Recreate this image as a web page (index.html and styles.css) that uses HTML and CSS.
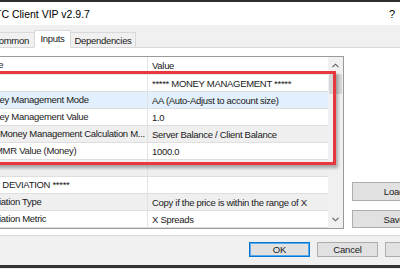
FILE: index.html
```html
<!DOCTYPE html>
<html lang="en">
<head>
    <meta charset="UTF-8">
    <title>TC Client VIP v2.9.7</title>
    <link rel="stylesheet" href="styles.css">
</head>
<body>
    <div class="topline"></div>

    <div class="titlebar">
        <span class="title">TC Client VIP v2.9.7</span>
        <span class="help">?</span>
    </div>

    <div class="tabstrip">
        <div class="tab tab-common">Common</div>
        <div class="tab tab-active">Inputs</div>
        <div class="tab tab-deps">Dependencies</div>
    </div>

    <div class="page">
        <div class="listview">
            <div class="lv-main">
                <div class="lv-row lv-header">
                    <div class="cell name ind-name">Name</div>
                    <div class="cell value">Value</div>
                </div>
                <div class="lv-row">
                    <div class="cell name"></div>
                    <div class="cell value">***** MONEY MANAGEMENT *****</div>
                </div>
                <div class="lv-row selected">
                    <div class="cell name ind-mon">Money Management Mode</div>
                    <div class="cell value">AA (Auto-Adjust to account size)</div>
                </div>
                <div class="lv-row">
                    <div class="cell name ind-mon">Money Management Value</div>
                    <div class="cell value">1.0</div>
                </div>
                <div class="lv-row alt">
                    <div class="cell name ind-calc">Money Management Calculation M...</div>
                    <div class="cell value">Server Balance / Client Balance</div>
                </div>
                <div class="lv-row">
                    <div class="cell name ind-mmr">MMR Value (Money)</div>
                    <div class="cell value">1000.0</div>
                </div>
                <div class="lv-row alt">
                    <div class="cell name"></div>
                    <div class="cell value"></div>
                </div>
                <div class="lv-row">
                    <div class="cell name ind-dev">***** DEVIATION *****</div>
                    <div class="cell value"></div>
                </div>
                <div class="lv-row alt">
                    <div class="cell name ind-dv">Deviation Type</div>
                    <div class="cell value">Copy if the price is within the range of X</div>
                </div>
                <div class="lv-row">
                    <div class="cell name ind-dv">Deviation Metric</div>
                    <div class="cell value">X Spreads</div>
                </div>
            </div>

            <div class="lv-scroll">
                <div class="sb-btn">
                    <svg width="7" height="5" viewBox="0 0 7 5"><path d="M0.5 4.2 L3.5 1.2 L6.5 4.2" fill="none" stroke="#606060" stroke-width="1.1"/></svg>
                </div>
                <div class="sb-thumb"></div>
                <div class="sb-track"></div>
                <div class="sb-btn">
                    <svg width="7" height="5" viewBox="0 0 7 5"><path d="M0.5 0.8 L3.5 3.8 L6.5 0.8" fill="none" stroke="#606060" stroke-width="1.1"/></svg>
                </div>
            </div>

            <div class="highlight"></div>
        </div>

        <div class="side">
            <button class="btn side-btn load">Load</button>
            <button class="btn side-btn">Save</button>
        </div>
    </div>

    <div class="footer">
        <button class="btn btn-ok">OK</button>
        <button class="btn">Cancel</button>
        <button class="btn">Reset</button>
    </div>

    <div class="bottomline"></div>
</body>
</html>
```

FILE: styles.css
```css
* {
    margin: 0;
    padding: 0;
    box-sizing: border-box;
}

body {
    width: 400px;
    height: 269px;
    overflow: hidden;
    background: #f0f0f0;
    font-family: 'Liberation Sans', Arial, sans-serif;
    font-size: 9.5px;
    letter-spacing: -0.3px;
    color: #1a1a1a;
}

.topline {
    height: 2px;
    background: #2e2e2e;
}

.titlebar {
    height: 23px;
    background: #fff;
    display: flex;
    align-items: center;
    justify-content: space-between;
    font-size: 10.5px;
    letter-spacing: 0;
    color: #000;
}

.title {
    margin-left: -5px;
}

.help {
    font-size: 11px;
    margin-right: 5px;
}

/* tabs */
.tabstrip {
    height: 23px;
    display: flex;
    align-items: flex-end;
    margin-left: -14px;
    margin-bottom: -1px;
    position: relative;
    z-index: 1;
}

.tab {
    height: 16px;
    display: flex;
    align-items: center;
    justify-content: center;
    background: #f0f0f0;
    border: 1px solid #d9d9d9;
    color: #1a1a1a;
    flex-shrink: 0;
}

.tab-common {
    width: 48px;
    border-right: none;
}

.tab-active {
    width: 37px;
    height: 18px;
    background: #fff;
    border-bottom-color: #fff;
    padding-bottom: 2px;
}

.tab-deps {
    width: 65px;
    border-left: none;
}

/* tab page */
.page {
    height: 189px;
    background: #fff;
    border-top: 1px solid #d9d9d9;
    border-bottom: 1px solid #d9d9d9;
    padding-top: 8px;
    display: flex;
    align-items: flex-start;
}

.listview {
    position: relative;
    width: 344px;
    height: 173px;
    flex-shrink: 0;
    display: flex;
    border: 1px solid #9a9a9a;
    border-left: none;
}

.lv-main {
    flex: 1;
    display: flex;
    flex-direction: column;
}

.lv-row {
    height: 17px;
    display: flex;
    border-bottom: 1px solid #dedede;
    background: #fff;
}

.lv-header {
    height: 18px;
    border-bottom-color: #e5e5e5;
}

.lv-row.alt {
    background: #efefef;
}

.lv-row.selected {
    background: #e2effc;
}

.cell {
    display: flex;
    align-items: center;
    white-space: nowrap;
    overflow: hidden;
}

.name {
    width: 148px;
    border-right: 1px solid #e2e2e2;
    display: block;
    line-height: 16px;
}

.value {
    flex: 1;
    padding-left: 4px;
}

.ind-name { text-indent: -21px; }
.ind-mon { text-indent: -18px; }
.ind-calc { text-indent: 0; }
.ind-mmr { text-indent: -5px; }
.ind-dev { text-indent: -17px; }
.ind-dv { text-indent: -17px; }

/* scrollbar */
.lv-scroll {
    width: 15px;
    display: flex;
    flex-direction: column;
    background: #f0f0f0;
}

.sb-btn {
    height: 17px;
    display: flex;
    align-items: center;
    justify-content: center;
}

.sb-thumb {
    height: 20px;
    margin: 0 1px;
    background: #d6d6d6;
}

.sb-track {
    flex: 1;
}

/* red annotation box */
.highlight {
    position: absolute;
    top: 14px;
    left: -10px;
    width: 346px;
    height: 94px;
    border: 3px solid #e8383d;
    box-shadow: 2px 3px 3px rgba(0, 0, 0, 0.3);
    pointer-events: none;
}

/* buttons */
.btn {
    font-family: 'Liberation Sans', Arial, sans-serif;
    font-size: 9.5px;
    letter-spacing: -0.2px;
    color: #1a1a1a;
    background: #e1e1e1;
    border: 1px solid #adadad;
    flex-shrink: 0;
}

.side {
    flex-shrink: 0;
    margin-left: 8px;
    padding-top: 126px;
    display: flex;
    flex-direction: column;
    gap: 9px;
}

.side-btn {
    width: 84px;
    height: 18px;
}

.side-btn.load {
    height: 19px;
}

.footer {
    height: 29px;
    padding: 6px 0 0 249px;
    display: flex;
    align-items: flex-start;
    gap: 7px;
}

.footer .btn {
    width: 61px;
    height: 15px;
}

.btn-ok {
    border-color: #0078d7;
    box-shadow: inset 0 0 0 1px #5fa8e6;
}

.bottomline {
    height: 3px;
    background: #333;
}
```
